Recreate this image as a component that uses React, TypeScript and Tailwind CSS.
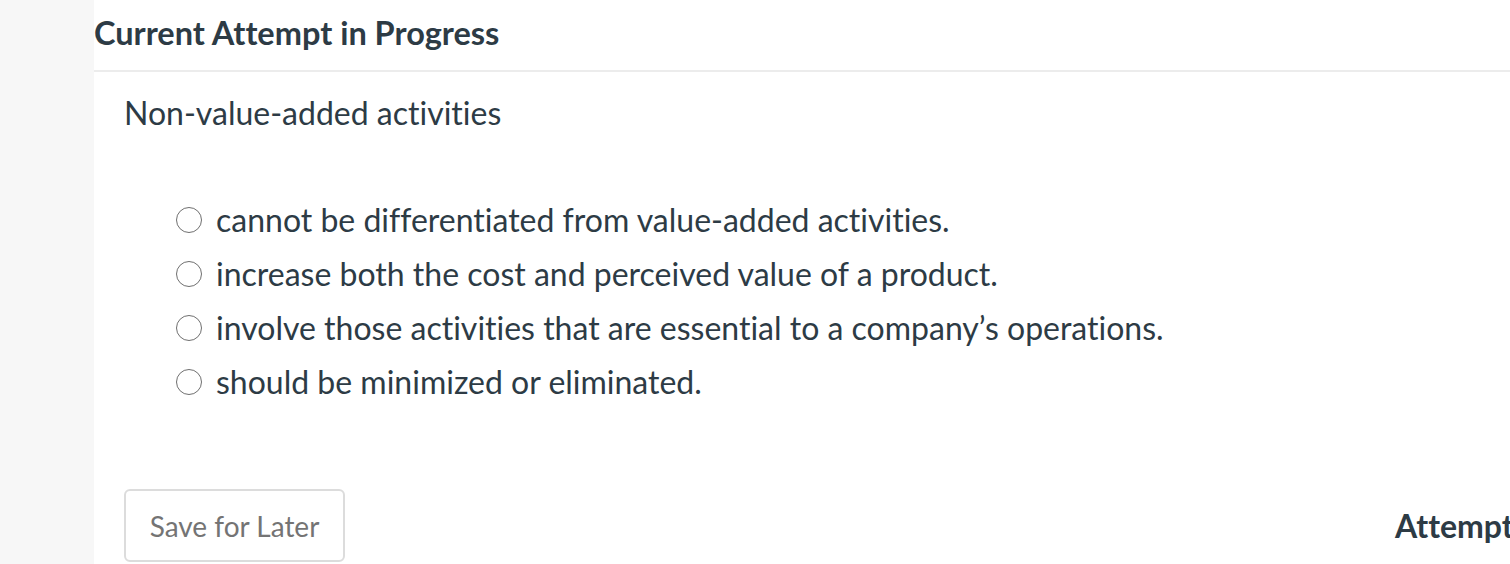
import React from 'react'

const options = [
  'cannot be differentiated from value-added activities.',
  'increase both the cost and perceived value of a product.',
  'involve those activities that are essential to a company’s operations.',
  'should be minimized or eliminated.',
]

const App: React.FC = () => {
  return (
    <div
      className="flex h-[564px] w-[1510px] overflow-hidden bg-white text-[#2d3b45] [font-variant-ligatures:none]"
      style={{ fontFamily: 'Lato, "Open Sans", sans-serif' }}
    >
      {/* Left gutter */}
      <div className="w-[94px] shrink-0 bg-[#f7f7f7]" />

      {/* Main */}
      <div className="flex min-w-0 flex-1 flex-col">
        <div className="border-b-2 border-[#ececec] pt-[13px] pb-[18px]">
          <h2 className="whitespace-nowrap text-[32.5px] font-bold leading-[1.2]">Current Attempt in Progress</h2>
        </div>

        <div className="pl-[30px]">
          <p className="mt-[22px] text-[32px] leading-[1.2]">Non-value-added activities</p>

          {/* Options */}
          <div className="mt-[61px] flex flex-col pl-[52px]">
            {options.map((opt) => (
              <label key={opt} className="flex h-[54px] items-center">
                <span className="mr-[14px] h-[26px] w-[26px] shrink-0 rounded-full border-[1.5px] border-[#6f6f6f] bg-white" />
                <span className="whitespace-nowrap text-[32px] leading-[1.2]">{opt}</span>
              </label>
            ))}
          </div>

          {/* Footer */}
          <div className="mt-[80px] flex items-center">
            <button className="h-[73px] w-[221px] shrink-0 rounded-[6px] border-2 border-[#dcdcdc] bg-white text-[28px] text-[#747474]">
              Save for Later
            </button>
            <div className="ml-[1050px] shrink-0 whitespace-nowrap text-[32px] font-bold">
              Attempts: 0 of 3 used
            </div>
          </div>
        </div>
      </div>
    </div>
  )
}

export default App
